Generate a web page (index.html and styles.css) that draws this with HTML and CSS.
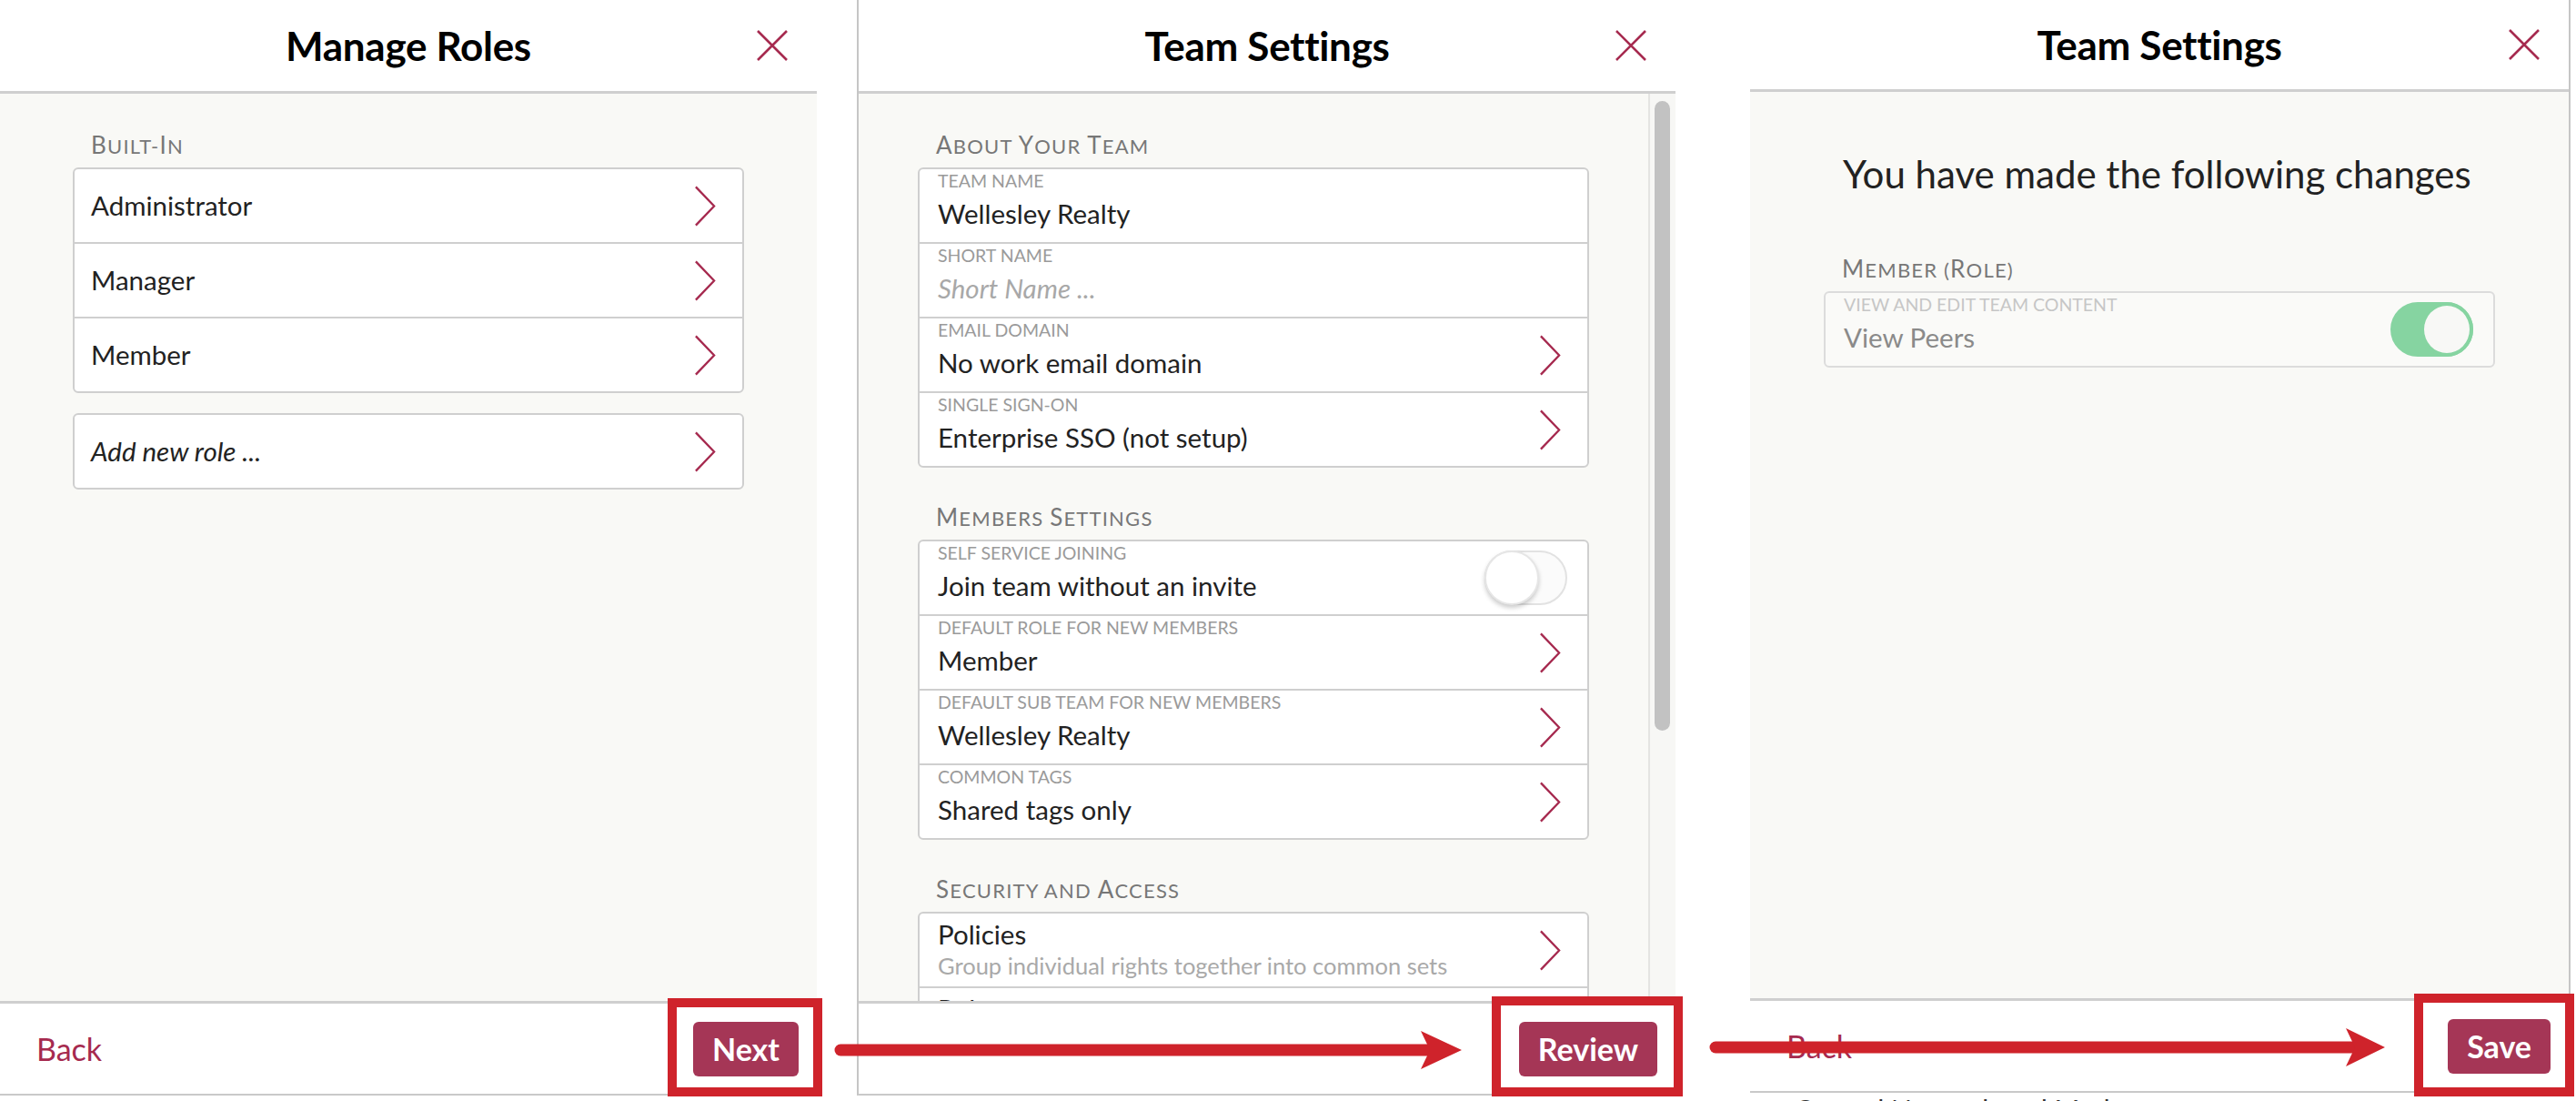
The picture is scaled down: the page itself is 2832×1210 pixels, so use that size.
FILE: index.html
```html
<!DOCTYPE html>
<html lang="en">
<head>
    <meta charset="UTF-8">
    <title>Team Settings walkthrough</title>
    <link rel="stylesheet" href="styles.css">
</head>
<body>
    <div class="board">
        <!-- step 1 -->
        <section class="panel panel-roles">
            <header class="panel-head">
                <span></span>
                <h1>Manage Roles</h1>
                <button class="close"><svg viewBox="0 0 34 34"><path d="M1 1L33 33M33 1L1 33"/></svg></button>
            </header>
            <div class="panel-body">
                <div class="content">
                    <div class="group-label"><span class="cap">B</span>UILT-<span class="cap">I</span>N</div>
                    <div class="card">
                        <div class="row simple"><span class="value">Administrator</span><svg class="chev" viewBox="0 0 26 48"><path d="M2 2L23 24L2 46"/></svg></div>
                        <div class="row simple"><span class="value">Manager</span><svg class="chev" viewBox="0 0 26 48"><path d="M2 2L23 24L2 46"/></svg></div>
                        <div class="row simple"><span class="value">Member</span><svg class="chev" viewBox="0 0 26 48"><path d="M2 2L23 24L2 46"/></svg></div>
                    </div>
                    <div class="card add-card">
                        <div class="row simple"><span class="value italic">Add new role ...</span><svg class="chev" viewBox="0 0 26 48"><path d="M2 2L23 24L2 46"/></svg></div>
                    </div>
                </div>
            </div>
            <footer class="panel-foot">
                <a class="back">Back</a>
                <button class="primary">Next</button>
            </footer>
        </section>

        <!-- step 2 -->
        <section class="panel panel-settings">
            <header class="panel-head">
                <span></span>
                <h1>Team Settings</h1>
                <button class="close"><svg viewBox="0 0 34 34"><path d="M1 1L33 33M33 1L1 33"/></svg></button>
            </header>
            <div class="panel-body">
                <div class="content">
                    <div class="group-label"><span class="cap">A</span>BOUT <span class="cap">Y</span>OUR <span class="cap">T</span>EAM</div>
                    <div class="card">
                        <div class="row field"><div><div class="label">TEAM NAME</div><div class="value">Wellesley Realty</div></div></div>
                        <div class="row field"><div><div class="label">SHORT NAME</div><div class="value placeholder">Short Name ...</div></div></div>
                        <div class="row field"><div><div class="label">EMAIL DOMAIN</div><div class="value">No work email domain</div></div><svg class="chev" viewBox="0 0 26 48"><path d="M2 2L23 24L2 46"/></svg></div>
                        <div class="row field"><div><div class="label">SINGLE SIGN-ON</div><div class="value">Enterprise SSO (not setup)</div></div><svg class="chev" viewBox="0 0 26 48"><path d="M2 2L23 24L2 46"/></svg></div>
                    </div>

                    <div class="group-label"><span class="cap">M</span>EMBERS <span class="cap">S</span>ETTINGS</div>
                    <div class="card">
                        <div class="row field"><div><div class="label">SELF SERVICE JOINING</div><div class="value">Join team without an invite</div></div><span class="toggle"><span class="knob"></span></span></div>
                        <div class="row field"><div><div class="label">DEFAULT ROLE FOR NEW MEMBERS</div><div class="value">Member</div></div><svg class="chev" viewBox="0 0 26 48"><path d="M2 2L23 24L2 46"/></svg></div>
                        <div class="row field"><div><div class="label">DEFAULT SUB TEAM FOR NEW MEMBERS</div><div class="value">Wellesley Realty</div></div><svg class="chev" viewBox="0 0 26 48"><path d="M2 2L23 24L2 46"/></svg></div>
                        <div class="row field"><div><div class="label">COMMON TAGS</div><div class="value">Shared tags only</div></div><svg class="chev" viewBox="0 0 26 48"><path d="M2 2L23 24L2 46"/></svg></div>
                    </div>

                    <div class="group-label"><span class="cap">S</span>ECURITY AND <span class="cap">A</span>CCESS</div>
                    <div class="card">
                        <div class="row described"><div><div class="value">Policies</div><div class="hint">Group individual rights together into common sets</div></div><svg class="chev" viewBox="0 0 26 48"><path d="M2 2L23 24L2 46"/></svg></div>
                        <div class="row described"><div><div class="value">Roles</div><div class="hint">Assign policies to groups of members</div></div><svg class="chev" viewBox="0 0 26 48"><path d="M2 2L23 24L2 46"/></svg></div>
                    </div>
                </div>
                <div class="scrollbar"><div class="thumb"></div></div>
            </div>
            <footer class="panel-foot">
                <a class="back"></a>
                <button class="primary">Review</button>
            </footer>
        </section>

        <!-- step 3 -->
        <div class="last-col">
            <section class="panel panel-review">
                <header class="panel-head">
                    <span></span>
                    <h1>Team Settings</h1>
                    <button class="close"><svg viewBox="0 0 34 34"><path d="M1 1L33 33M33 1L1 33"/></svg></button>
                </header>
                <div class="panel-body">
                    <div class="content">
                        <h2 class="changes">You have made the following changes</h2>
                        <div class="group-label"><span class="cap">M</span>EMBER (<span class="cap">R</span>OLE)</div>
                        <div class="card disabled">
                            <div class="row field"><div><div class="label">VIEW AND EDIT TEAM CONTENT</div><div class="value">View Peers</div></div><span class="toggle on"><span class="knob"></span></span></div>
                        </div>
                    </div>
                </div>
                <footer class="panel-foot">
                    <a class="back">Back</a>
                    <button class="primary">Save</button>
                </footer>
            </section>
            <div class="behind">Control Network and Mode</div>
        </div>

        <!-- annotations drawn over the screenshots -->
        <div class="mark mark-next"></div>
        <div class="mark mark-review"></div>
        <div class="mark mark-save"></div>
        <svg class="arrow arrow-one" viewBox="0 0 690 46"><path class="shaft" d="M7 23H660"/><path class="head" d="M645 2L690 23L645 44L655 23Z"/></svg>
        <svg class="arrow arrow-two" viewBox="0 0 743 46"><path class="shaft" d="M7 23H710"/><path class="head" d="M700 2L743 23L700 44L710 23Z"/></svg>
    </div>
</body>
</html>
```

FILE: styles.css
```css
* {
    box-sizing: border-box;
}
body {
    margin: 0;
    width: 2832px;
    height: 1210px;
    overflow: hidden;
    background: #fff;
    font-family: Lato, "Open Sans", sans-serif;
    color: #222;
}
.board {
    position: relative;
    display: flex;
    align-items: flex-start;
    height: 1210px;
}
.panel {
    display: flex;
    flex-direction: column;
    height: 1204px;
    background: #fff;
    border-bottom: 2px solid #c9c9c9;
}
.panel-roles {
    width: 898px;
}
.panel-settings {
    width: 900px;
    margin-left: 44px;
    border-left: 2px solid #c6c6c6;
}
.last-col {
    margin-left: 82px;
    width: 902px;
}
.panel-review {
    width: 902px;
    height: 1201px;
    border-right: 2px solid #c6c6c6;
}
.panel-head {
    display: grid;
    grid-template-columns: 1fr auto 1fr;
    align-items: center;
    height: 103px;
    flex: none;
    border-bottom: 3px solid #cfcfcf;
}
.panel-review .panel-head {
    height: 101px;
}
.panel-head h1 {
    margin: 0;
    font-size: 44px;
    font-weight: 700;
    color: #000;
    letter-spacing: -0.3px;
}
.close {
    justify-self: end;
    margin-right: 32px;
    padding: 0;
    border: none;
    background: none;
    width: 34px;
    height: 34px;
}
.close svg {
    display: block;
    width: 34px;
    height: 34px;
    stroke: #a62a4f;
    stroke-width: 2.6;
    fill: none;
}
.panel-body {
    flex: 1;
    display: flex;
    min-height: 0;
    overflow: hidden;
    background: #f9f9f6;
}
.content {
    flex: 1;
    padding: 43px 0 0;
    display: flex;
    flex-direction: column;
    align-items: center;
}
.content > * {
    width: 738px;
}
.group-label {
    height: 30px;
    font-size: 22px;
    line-height: 30px;
    letter-spacing: 1.2px;
    color: #777;
    padding-left: 20px;
    margin-bottom: 8px;
    flex: none;
}
.group-label .cap {
    font-size: 26px;
    line-height: 1;
}
.card {
    background: #fff;
    border: 2px solid #cfcfcf;
    border-radius: 6px;
    margin-bottom: 41px;
    flex: none;
}
.card.add-card {
    margin-top: -19px;
}
.row {
    display: flex;
    align-items: center;
    justify-content: space-between;
    height: 82px;
    padding: 0 28px 0 20px;
    border-bottom: 2px solid #cfcfcf;
}
.row:last-child {
    border-bottom: none;
    height: 80px;
}
.row.simple {
    padding-left: 18px;
}
.row.field {
    align-items: flex-start;
}
.row.field > div:first-child {
    padding-top: 2px;
}
.row.field .chev,
.row.field .toggle {
    align-self: center;
}
.label {
    font-size: 19.5px;
    line-height: 22px;
    color: #9a9a9a;
    margin-bottom: 8px;
}
.value {
    font-size: 29.5px;
    line-height: 34px;
    color: #222;
}
.italic,
.placeholder {
    font-style: italic;
}
.placeholder {
    color: #a8a8a8;
}
.row.described {
    align-items: flex-start;
}
.row.described > div:first-child {
    padding-top: 6px;
}
.row.described .chev {
    align-self: center;
}
.hint {
    font-size: 25.5px;
    line-height: 30px;
    color: #a9a9a9;
    margin-top: 2px;
}
.chev {
    width: 25px;
    height: 47px;
    flex: none;
    stroke: #a62a4f;
    stroke-width: 2.4;
    fill: none;
}
.toggle {
    position: relative;
    width: 91px;
    height: 60px;
    margin-right: -6px;
    border-radius: 30px;
    background: #fbfbfb;
    border: 2px solid #e2e2e2;
}
.toggle .knob {
    position: absolute;
    left: -2px;
    top: -2px;
    width: 60px;
    height: 60px;
    border-radius: 50%;
    background: #fff;
    border: 2px solid #e6e6e6;
    box-shadow: 0 3px 5px rgba(0, 0, 0, 0.2);
}
.toggle.on {
    background: #86d4a1;
    border-color: #86d4a1;
}
.toggle.on .knob {
    left: auto;
    right: -2px;
    width: 58px;
    background: #f8f8f6;
    border: 4px solid #86d4a1;
    box-shadow: none;
}
.scrollbar {
    width: 30px;
    flex: none;
    background: #f7f7f5;
    border-left: 2px solid #e4e4e2;
    padding: 8px 0 0 5px;
}
.thumb {
    width: 17px;
    height: 692px;
    border-radius: 9px;
    background: #c2c2c2;
}
.changes {
    margin: 24px 0 0;
    padding-left: 21px;
    font-size: 42px;
    line-height: 46px;
    font-weight: 400;
    color: #222;
}
.panel-review .group-label {
    margin-top: 68px;
}
.card.disabled {
    background: #fafaf8;
    border-color: #dcdcdc;
}
.card.disabled .label {
    color: #c6c6c6;
}
.card.disabled .value {
    color: #8a8a8a;
}
.panel-foot {
    flex: none;
    height: 102px;
    display: flex;
    align-items: center;
    justify-content: space-between;
    padding: 0 20px 0 40px;
    border-top: 3px solid #cfcfcf;
    background: #fff;
}
.back {
    font-size: 34px;
    color: #a62a4f;
}
.primary {
    height: 60px;
    padding: 0 21px;
    border: none;
    border-radius: 6px;
    background: #a53656;
    color: #fff;
    font-family: Lato, "Open Sans", sans-serif;
    font-size: 34px;
    font-weight: 700;
}
.behind {
    padding-left: 49px;
    font-size: 30px;
    line-height: 36px;
    color: #333;
}
.mark {
    position: absolute;
    border: 10px solid #cf232b;
}
.mark-next {
    left: 734px;
    top: 1097px;
    width: 170px;
    height: 108px;
}
.mark-review {
    left: 1640px;
    top: 1095px;
    width: 210px;
    height: 110px;
}
.mark-save {
    left: 2654px;
    top: 1092px;
    width: 176px;
    height: 113px;
}
.arrow {
    position: absolute;
    height: 46px;
}
.arrow .shaft {
    stroke: #cf232b;
    stroke-width: 13;
    stroke-linecap: round;
    fill: none;
}
.arrow .head {
    fill: #cf232b;
}
.arrow-one {
    left: 917px;
    top: 1131px;
    width: 690px;
}
.arrow-two {
    left: 1879px;
    top: 1128px;
    width: 743px;
}
```
